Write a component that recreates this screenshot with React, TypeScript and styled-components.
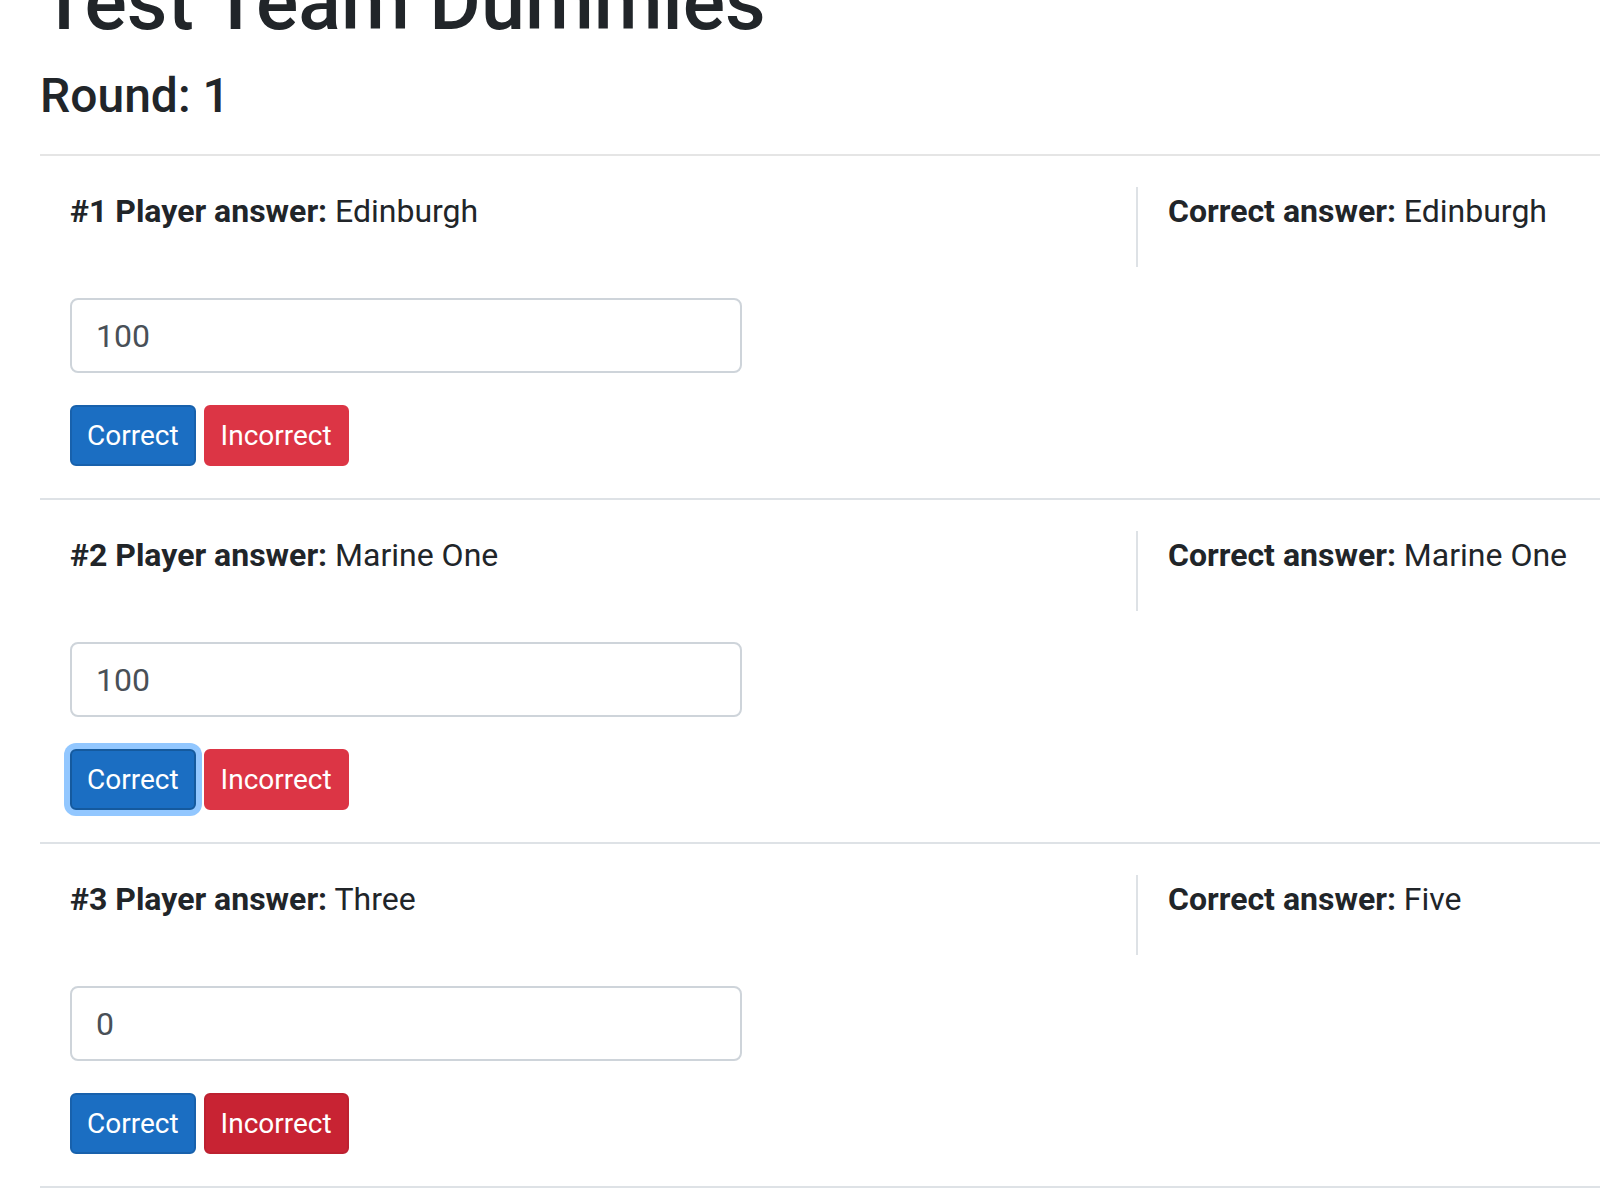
import styled, { createGlobalStyle, css } from "styled-components";

const GlobalStyle = createGlobalStyle`
  html, body {
    margin: 0;
    padding: 0;
    background: #ffffff;
    overflow: hidden;
  }

  body {
    font-family: Roboto, "Liberation Sans", sans-serif;
    color: #212529;
  }
`;

const Page = styled.main`
  padding-left: 40px;
  width: 1560px;
`;

const TeamTitle = styled.h1`
  margin: -45px 0 17px 0;
  font-size: 79px;
  font-weight: 500;
  line-height: 1.2;
`;

const RoundTitle = styled.h4`
  margin: 0;
  font-size: 48px;
  font-weight: 500;
  line-height: 1.2;
`;

const Divider = styled.hr`
  margin: 30px 0 0 0;
  border: 0;
  border-top: 2px solid rgba(0, 0, 0, 0.1);
`;

const AnswerItem = styled.section`
  display: flex;
  flex-direction: column;
  align-items: flex-start;
  padding: 31px 0 32px 30px;
  border-bottom: 2px solid #dee2e6;
`;

const AnswerHeader = styled.div`
  display: flex;
  width: 100%;
  font-size: 32px;
  line-height: 48px;
  margin-bottom: 31px;
`;

const PlayerCol = styled.div`
  flex: 0 0 1066px;
  padding-bottom: 32px;
`;

const CorrectCol = styled.div`
  flex: 1;
  border-left: 2px solid #dee2e6;
  padding: 0 0 32px 30px;
  white-space: nowrap;
`;

const Label = styled.strong`
  font-weight: 700;
`;

const ScoreInput = styled.input`
  box-sizing: border-box;
  width: 672px;
  height: 75px;
  padding: 0 24px;
  border: 2px solid #ced4da;
  border-radius: 8px;
  font-family: inherit;
  font-size: 32px;
  color: #495057;
  background: #ffffff;
  outline: none;
  margin-bottom: 32px;
`;

const ButtonRow = styled.div`
  display: flex;
  gap: 8px;
`;

type Variant = "primary" | "danger";

const palette: Record<Variant, { bg: string; border: string; hoverBg: string; hoverBorder: string }> = {
  primary: { bg: "#1b6ec2", border: "#1861ac", hoverBg: "#1b6ec2", hoverBorder: "#1861ac" },
  danger: { bg: "#dc3545", border: "#dc3545", hoverBg: "#c82333", hoverBorder: "#bd2130" },
};

const ActionButton = styled.button<{ $variant: Variant; $hover?: boolean; $focus?: boolean }>`
  box-sizing: border-box;
  height: 61px;
  padding: 0 15px;
  border-radius: 6px;
  font-family: inherit;
  font-size: 28px;
  line-height: 1;
  color: #ffffff;
  cursor: pointer;
  background: ${(p) => palette[p.$variant].bg};
  border: 2px solid ${(p) => palette[p.$variant].border};

  ${(p) =>
    p.$hover &&
    css`
      background: ${palette[p.$variant].hoverBg};
      border-color: ${palette[p.$variant].hoverBorder};
    `}

  ${(p) =>
    p.$focus &&
    css`
      border-color: #155a9e;
      box-shadow: 0 0 0 6px rgba(38, 143, 255, 0.5);
    `}
`;

const answers = [
  { num: 1, player: "Edinburgh", correct: "Edinburgh", score: "100", focus: false, hover: false },
  { num: 2, player: "Marine One", correct: "Marine One", score: "100", focus: true, hover: false },
  { num: 3, player: "Three", correct: "Five", score: "0", focus: false, hover: true },
];

function App() {
  return (
    <>
      <GlobalStyle />
      <Page>
        <TeamTitle>Test Team Dummies</TeamTitle>
        <RoundTitle>Round: 1</RoundTitle>
        <Divider />

        {answers.map((a) => (
          <AnswerItem key={a.num}>
            <AnswerHeader>
              <PlayerCol>
                <Label>#{a.num} Player answer:</Label> {a.player}
              </PlayerCol>
              <CorrectCol>
                <Label>Correct answer:</Label> {a.correct}
              </CorrectCol>
            </AnswerHeader>

            <ScoreInput type="text" defaultValue={a.score} />

            <ButtonRow>
              <ActionButton $variant="primary" $focus={a.focus}>
                Correct
              </ActionButton>
              <ActionButton $variant="danger" $hover={a.hover}>
                Incorrect
              </ActionButton>
            </ButtonRow>
          </AnswerItem>
        ))}
      </Page>
    </>
  );
}

export default App;
